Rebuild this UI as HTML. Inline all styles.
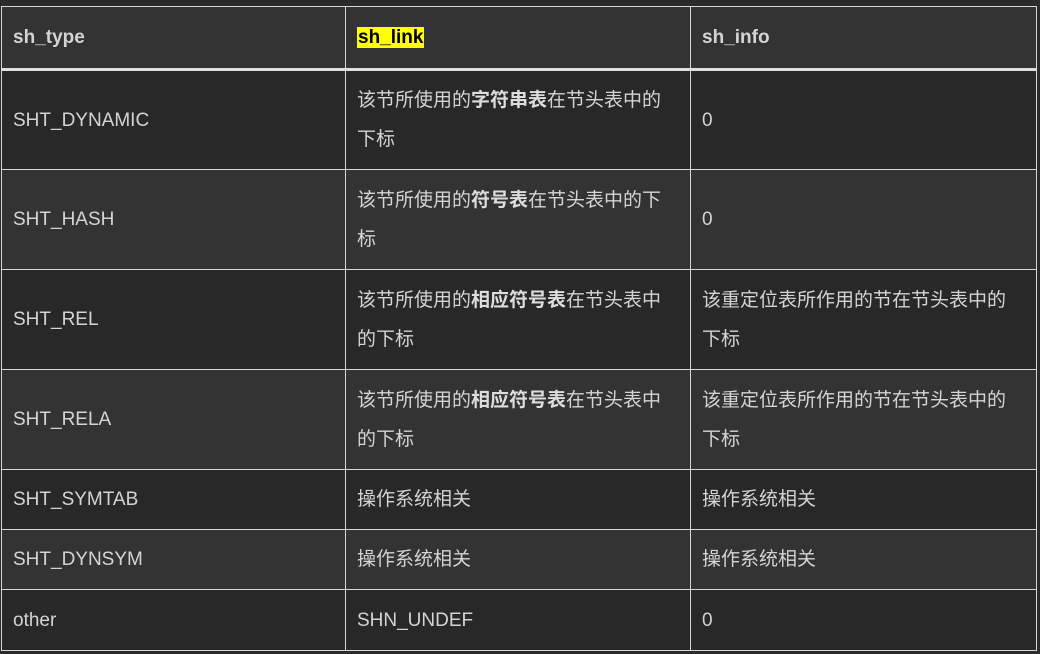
<!DOCTYPE html>
<html><head><meta charset="utf-8"><style>
html,body{margin:0;padding:0;background:#2b2b2b;width:1040px;height:654px;overflow:hidden}
body{font-family:"Liberation Sans","Noto Sans CJK SC",sans-serif;font-size:19px;color:#d4d4d4}
table{position:absolute;left:1px;top:6px;border-collapse:collapse;table-layout:fixed;width:1035px}
td,th{border:1.5px solid #d8d8d8;padding:0 11px;text-align:left;vertical-align:middle;line-height:39px;white-space:nowrap}
th{height:61px;background:#333;font-weight:bold;border-bottom:3px solid #e0e0e0;font-size:19px}
tr:nth-child(odd) td{background:#282828}
tr:nth-child(even) td{background:#333}
mark{background:#ff0;color:#000;padding:0 1px}
b{color:#ddd}
</style></head><body>
<table>
<colgroup><col style="width:344px"><col style="width:345px"><col style="width:346px"></colgroup>
<thead><tr><th>sh_type</th><th><mark>sh_link</mark></th><th>sh_info</th></tr></thead>
<tbody>
<tr style="height:100px"><td>SHT_DYNAMIC</td><td>该节所使用的<b>字符串表</b>在节头表中的<br>下标</td><td>0</td></tr>
<tr style="height:100px"><td>SHT_HASH</td><td>该节所使用的<b>符号表</b>在节头表中的下<br>标</td><td>0</td></tr>
<tr style="height:100px"><td>SHT_REL</td><td>该节所使用的<b>相应符号表</b>在节头表中<br>的下标</td><td>该重定位表所作用的节在节头表中的<br>下标</td></tr>
<tr style="height:100px"><td>SHT_RELA</td><td>该节所使用的<b>相应符号表</b>在节头表中<br>的下标</td><td>该重定位表所作用的节在节头表中的<br>下标</td></tr>
<tr style="height:60px"><td>SHT_SYMTAB</td><td>操作系统相关</td><td>操作系统相关</td></tr>
<tr style="height:60px"><td>SHT_DYNSYM</td><td>操作系统相关</td><td>操作系统相关</td></tr>
<tr style="height:61px"><td>other</td><td>SHN_UNDEF</td><td>0</td></tr>
</tbody></table>
</body></html>
